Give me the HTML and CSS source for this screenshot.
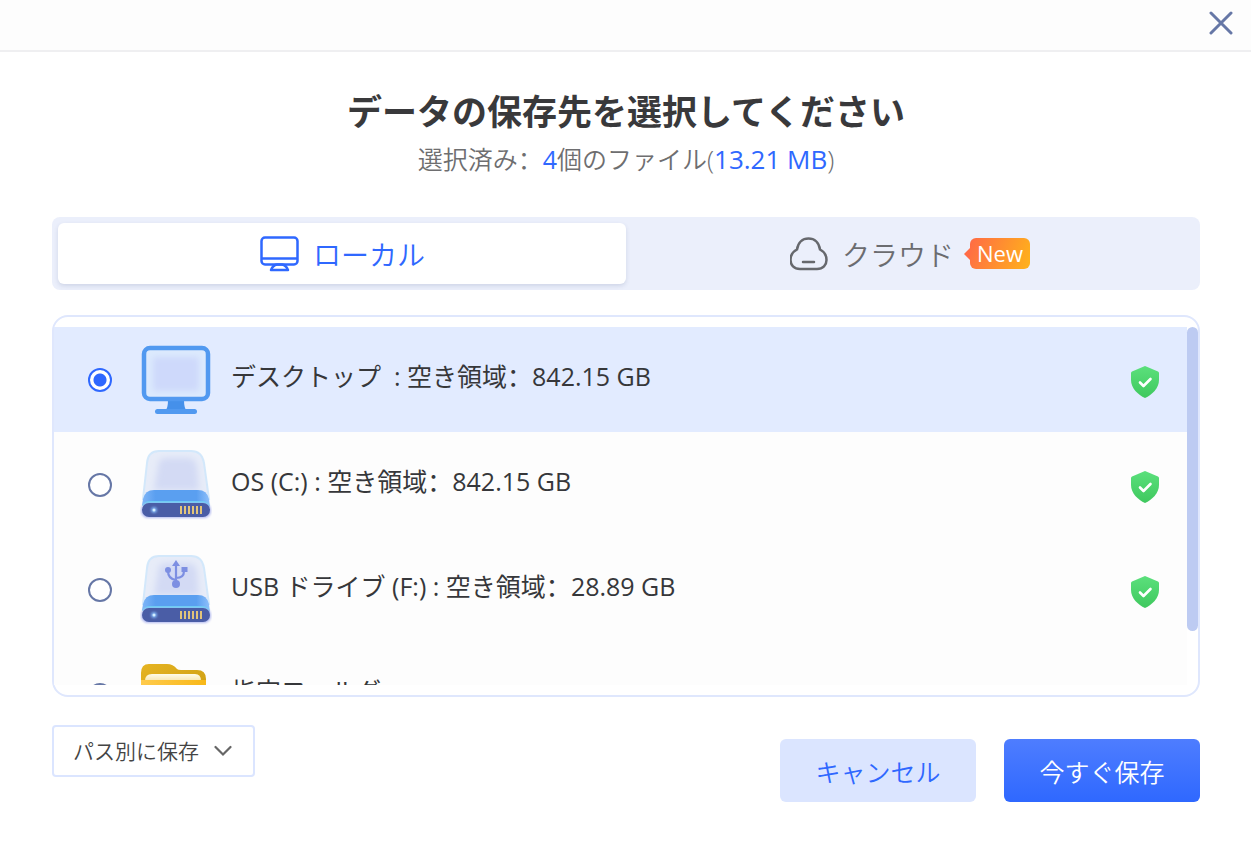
FILE: index.html
```html
<!DOCTYPE html>
<html lang="ja">
<head>
  <meta charset="UTF-8">
  <meta name="viewport" content="width=device-width, initial-scale=1.0">
  <title>データの保存先</title>
  <link rel="stylesheet" href="styles.css">
</head>
<body>
  <!-- shared gradients and icons -->
  <svg class="defs" aria-hidden="true">
    <defs>
      <linearGradient id="shieldFill" x1="0" y1="0" x2="0" y2="1">
        <stop offset="0" stop-color="#5be07c"/>
        <stop offset="1" stop-color="#3fc85e"/>
      </linearGradient>
      <linearGradient id="bandFill" x1="0" y1="0" x2="1" y2="0">
        <stop offset="0" stop-color="#7fb6f8"/>
        <stop offset="0.2" stop-color="#5a9ff0"/>
        <stop offset="0.8" stop-color="#5a9ff0"/>
        <stop offset="1" stop-color="#8fc0fa"/>
      </linearGradient>
      <linearGradient id="folderBack" x1="0" y1="0" x2="1" y2="1">
        <stop offset="0" stop-color="#e6b422"/>
        <stop offset="1" stop-color="#c89a10"/>
      </linearGradient>
      <linearGradient id="folderFront" x1="0" y1="0" x2="1" y2="0">
        <stop offset="0" stop-color="#ffcb4d"/>
        <stop offset="1" stop-color="#f8b818"/>
      </linearGradient>
      <linearGradient id="paperFill" x1="0" y1="0" x2="0" y2="1">
        <stop offset="0" stop-color="#fffbe8"/>
        <stop offset="1" stop-color="#eecf70"/>
      </linearGradient>
      <filter id="soft" x="-20%" y="-20%" width="140%" height="140%"><feGaussianBlur stdDeviation="3"/></filter>
      <filter id="glow" x="-50%" y="-50%" width="200%" height="200%"><feGaussianBlur stdDeviation="1"/></filter>
      <symbol id="shield" viewBox="0 0 30 34">
        <path d="M15 1 28 6.500Q29 7 29 8V15C29 23 22 30 15 33 8 30 1 23 1 15V8Q1 7 2 6.500Z" fill="url(#shieldFill)"/>
        <path d="M10 17.500 13.500 21 20.500 14" fill="none" stroke="#fff" stroke-width="2.600" stroke-linecap="round" stroke-linejoin="round"/>
      </symbol>
      <symbol id="drive" viewBox="0 0 72 72">
        <path d="M7 14Q8 2 19 2H51Q62 2 64 14L69 50H3Z" fill="#e7ecf8" stroke="#d3e8fb" stroke-width="2"/>
        <path d="M18 18Q18 9 26 9H48Q56 9 57 18L59 41H14Z" fill="#d3daf4" filter="url(#soft)"/>
        <path d="M2 56 3 50Q5 41 14 41H58Q67 41 69 50L70 58Z" fill="url(#bandFill)"/>
        <path d="M2 57Q4 52 10 52H62Q68 52 70 57Z" fill="#68cdf4"/>
        <rect x="1" y="54" width="70" height="15" rx="7" fill="#b0b8ef" filter="url(#glow)"/>
        <rect x="2" y="54" width="68" height="14" rx="7" fill="#4a5da6"/>
        <circle cx="14" cy="61" r="3" fill="#7fb0f0" filter="url(#glow)"/>
        <circle cx="14" cy="61" r="1.500" fill="#d4eeff"/>
        <path d="M41 57V65M45 57V65M49 57V65M53 57V65M57 57V65M61 57V65" stroke="#e2c47a" stroke-width="2"/>
      </symbol>
    </defs>
  </svg>

  <div class="dialog">
    <header class="titlebar">
      <button class="close-btn" type="button" aria-label="閉じる">
        <svg width="24" height="24" viewBox="0 0 24 24"><path d="M2 2 22 22M22 2 2 22" fill="none" stroke="#6677a6" stroke-width="3" stroke-linecap="round"/></svg>
      </button>
    </header>

    <main class="content">
      <h1>データの保存先を選択してください</h1>
      <p class="subtitle">選択済み<span class="colon" lang="zh-CN">：</span><span class="num">4</span>個のファイル<span class="latin">(<span class="num">13.21 MB</span>)</span></p>

      <div class="tabs" role="tablist">
        <button class="tab active" type="button" role="tab" aria-selected="true">
          <svg width="40" height="36" viewBox="0 0 40 36" fill="none" stroke="#2f68ff" stroke-width="2.500">
            <rect x="2.500" y="1.500" width="36" height="27" rx="3.500"/>
            <path d="M3 22.500H38"/>
            <path d="M12 34H29Q27 29 23 28.500H18Q14 29 12 34Z" stroke-linejoin="round"/>
          </svg>
          <span>ローカル</span>
        </button>
        <button class="tab" type="button" role="tab" aria-selected="false">
          <svg width="38" height="36" viewBox="1 0 38 36" fill="none" stroke="#66686d" stroke-width="2.500" stroke-linecap="round">
            <path d="M11 33C5 33 1.500 29 1.500 24 1.500 19 4 15.500 8 13.500 9 6.500 13.500 2.500 19.500 2.500S30 6.500 31 13.500C35 15.500 37.500 19 37.500 24 37.500 29 34 33 28 33Z"/>
            <path d="M14 26H25"/>
          </svg>
          <span>クラウド</span>
          <span class="badge">New</span>
        </button>
      </div>

      <div class="list-box">
        <div class="list">
          <label class="item selected">
            <input type="radio" name="target" checked>
            <svg class="item-icon" viewBox="0 0 72 72">
              <path d="M28 56H44Q44 65 47 67H25Q28 65 28 56Z" fill="#4590ea"/>
              <rect x="15" y="65" width="42" height="5" rx="2.500" fill="#5199f0"/>
              <rect x="4" y="4" width="64" height="51" rx="6" fill="#dceafd" stroke="#5199f0" stroke-width="4.500"/>
              <rect x="13" y="13" width="46" height="34" fill="#ced9fb" filter="url(#soft)"/>
            </svg>
            <span class="item-name">デスクトップ&nbsp; : 空き領域<span class="colon" lang="zh-CN">：</span>842.15 GB</span>
            <svg class="shield"><use href="#shield"/></svg>
          </label>
          <label class="item">
            <input type="radio" name="target">
            <svg class="item-icon"><use href="#drive"/></svg>
            <span class="item-name">OS (C:) : 空き領域<span class="colon" lang="zh-CN">：</span>842.15 GB</span>
            <svg class="shield"><use href="#shield"/></svg>
          </label>
          <label class="item">
            <input type="radio" name="target">
            <svg class="item-icon" viewBox="0 0 72 72">
              <use href="#drive"/>
              <g fill="none" stroke="#7d8fe2" stroke-width="2.200">
                <path d="M36 30V10M36 26Q28 25 28 17M36 24Q44 24 44 17"/>
              </g>
              <g fill="#7d8fe2">
                <path d="M36 6 40 12H32Z"/>
                <circle cx="36" cy="30" r="4"/>
                <circle cx="28" cy="16" r="3"/>
                <rect x="41.500" y="13" width="6" height="5"/>
              </g>
            </svg>
            <span class="item-name">USB ドライブ (F:) : 空き領域<span class="colon" lang="zh-CN">：</span>28.89 GB</span>
            <svg class="shield"><use href="#shield"/></svg>
          </label>
          <label class="item">
            <input type="radio" name="target">
            <svg class="item-icon" viewBox="0 0 72 72">
              <path d="M1 14Q1 5 9 5H27Q33 5 37 10 38 11 41 11H57Q66 11 66 20V50H1Z" fill="url(#folderBack)"/>
              <path d="M5 30V22Q5 15 12 15H55Q61 15 61 22V30Z" fill="url(#paperFill)"/>
              <path d="M1 21H66V60Q66 67 59 67H8Q1 67 1 60Z" fill="url(#folderFront)"/>
            </svg>
            <span class="item-name">指定フォルダ</span>
          </label>
        </div>
        <div class="scrollbar"><div class="thumb"></div></div>
      </div>

      <footer class="footer">
        <select class="save-mode" aria-label="保存方法">
          <option>パス別に保存</option>
        </select>
        <div class="actions">
          <button class="btn" type="button">キャンセル</button>
          <button class="btn primary" type="button">今すぐ保存</button>
        </div>
      </footer>
    </main>
  </div>
</body>
</html>
```
FILE: styles.css
```css
* {
  box-sizing: border-box;
}
body {
  margin: 0;
  background: #fff;
  color: #36373a;
  font-family: "Open Sans", "Noto Sans CJK JP", sans-serif;
  font-size: 25px;
}
button,
select {
  font-family: inherit;
  cursor: pointer;
}
.defs {
  position: absolute;
  width: 0;
  height: 0;
}
.titlebar {
  display: flex;
  justify-content: flex-end;
  height: 52px;
  padding-right: 18px;
  background: #fdfdfd;
  border-bottom: 2px solid #efeff1;
}
.close-btn {
  display: flex;
  align-items: center;
  height: 46px;
  padding: 0;
  border: none;
  background: none;
}
.content {
  padding: 36px 51px 0 52px;
}
h1 {
  margin: 0;
  font-size: 35px;
  line-height: 48px;
  font-weight: 700;
  text-align: center;
  color: #39393b;
}
.subtitle {
  margin: 4px 0 40px;
  line-height: 36px;
  font-weight: 350;
  text-align: center;
  color: #6e6e70;
}
.num {
  font-weight: 400;
  color: #2f68ff;
}
.latin {
  font-size: 26px;
}
.colon {
  font-family: "Noto Sans CJK SC", sans-serif;
}

/* tabs */
.tabs {
  display: grid;
  grid-template-columns: 1fr 1fr;
  padding: 6px;
  border-radius: 8px;
  background: #ebeffb;
}
.tab {
  display: flex;
  align-items: center;
  justify-content: center;
  gap: 14px;
  height: 61px;
  padding: 0;
  border: none;
  border-radius: 6px;
  background: none;
  color: #6b6c70;
  font-size: 28px;
  font-weight: 350;
}
.tab.active {
  background: #fff;
  color: #2f68ff;
  box-shadow: 0 2px 4px rgba(60, 80, 130, 0.16);
}
.badge {
  position: relative;
  margin-left: 2px;
  padding: 0 7px;
  border-radius: 6px;
  background: linear-gradient(110deg, #ff6b45, #ffb31a);
  color: #fff;
  font-size: 22px;
  line-height: 31px;
  font-weight: 500;
}
.badge::before {
  content: "";
  position: absolute;
  left: -6px;
  top: 10px;
  border: 6px solid transparent;
  border-left: none;
  border-right-color: #ff6b45;
}

/* destinations */
.list-box {
  display: flex;
  margin-top: 25px;
  padding: 10px 0;
  border: 2px solid #dfe7fd;
  border-radius: 16px;
}
.list {
  flex: 1;
  height: 358px;
  overflow: hidden;
  background: #fdfdfd;
}
.item {
  display: flex;
  align-items: center;
  height: 105px;
  padding: 0 27px 0 34px;
}
.item.selected {
  background: #e2ebff;
}
.item input {
  appearance: none;
  width: 24px;
  height: 24px;
  margin: 0;
  border: 2px solid #6677a6;
  border-radius: 50%;
  background: #fff;
}
.item input:checked {
  border-color: #2f68ff;
  background: radial-gradient(circle, #2f68ff 6px, #fff 7px);
}
.item-icon {
  width: 72px;
  height: 72px;
  margin: 0 19px 0 28px;
}
.item-name {
  flex: 1;
  padding-bottom: 8px;
  line-height: 36px;
  white-space: nowrap;
}
.shield {
  width: 30px;
  height: 34px;
  margin-top: 4px;
}
.scrollbar {
  width: 11px;
}
.thumb {
  height: 85%;
  border-radius: 6px;
  background: #bdcbf2;
}

/* footer */
.footer {
  display: flex;
  align-items: flex-start;
  justify-content: space-between;
  margin-top: 28px;
}
.save-mode {
  appearance: none;
  height: 52px;
  padding: 0 54px 0 19px;
  border: 2px solid #dbe5ff;
  border-radius: 4px;
  background: #fff url("data:image/svg+xml,%3Csvg xmlns='http://www.w3.org/2000/svg' width='18' height='12' viewBox='0 0 18 12'%3E%3Cpath d='M1.500 2 9 9.500 16.500 2' fill='none' stroke='%23666' stroke-width='2.200' stroke-linecap='round'/%3E%3C/svg%3E") no-repeat right 21px center;
  color: #444;
  font-size: 21px;
  font-weight: 350;
}
.actions {
  display: flex;
  gap: 28px;
  padding-top: 14px;
}
.btn {
  width: 196px;
  height: 63px;
  padding: 0;
  border: none;
  border-radius: 6px;
  background: #dbe5ff;
  color: #2f68ff;
  font-size: 25px;
  font-weight: 350;
}
.btn.primary {
  background: linear-gradient(#4e7dff, #2f68ff);
  color: #fff;
}
```
